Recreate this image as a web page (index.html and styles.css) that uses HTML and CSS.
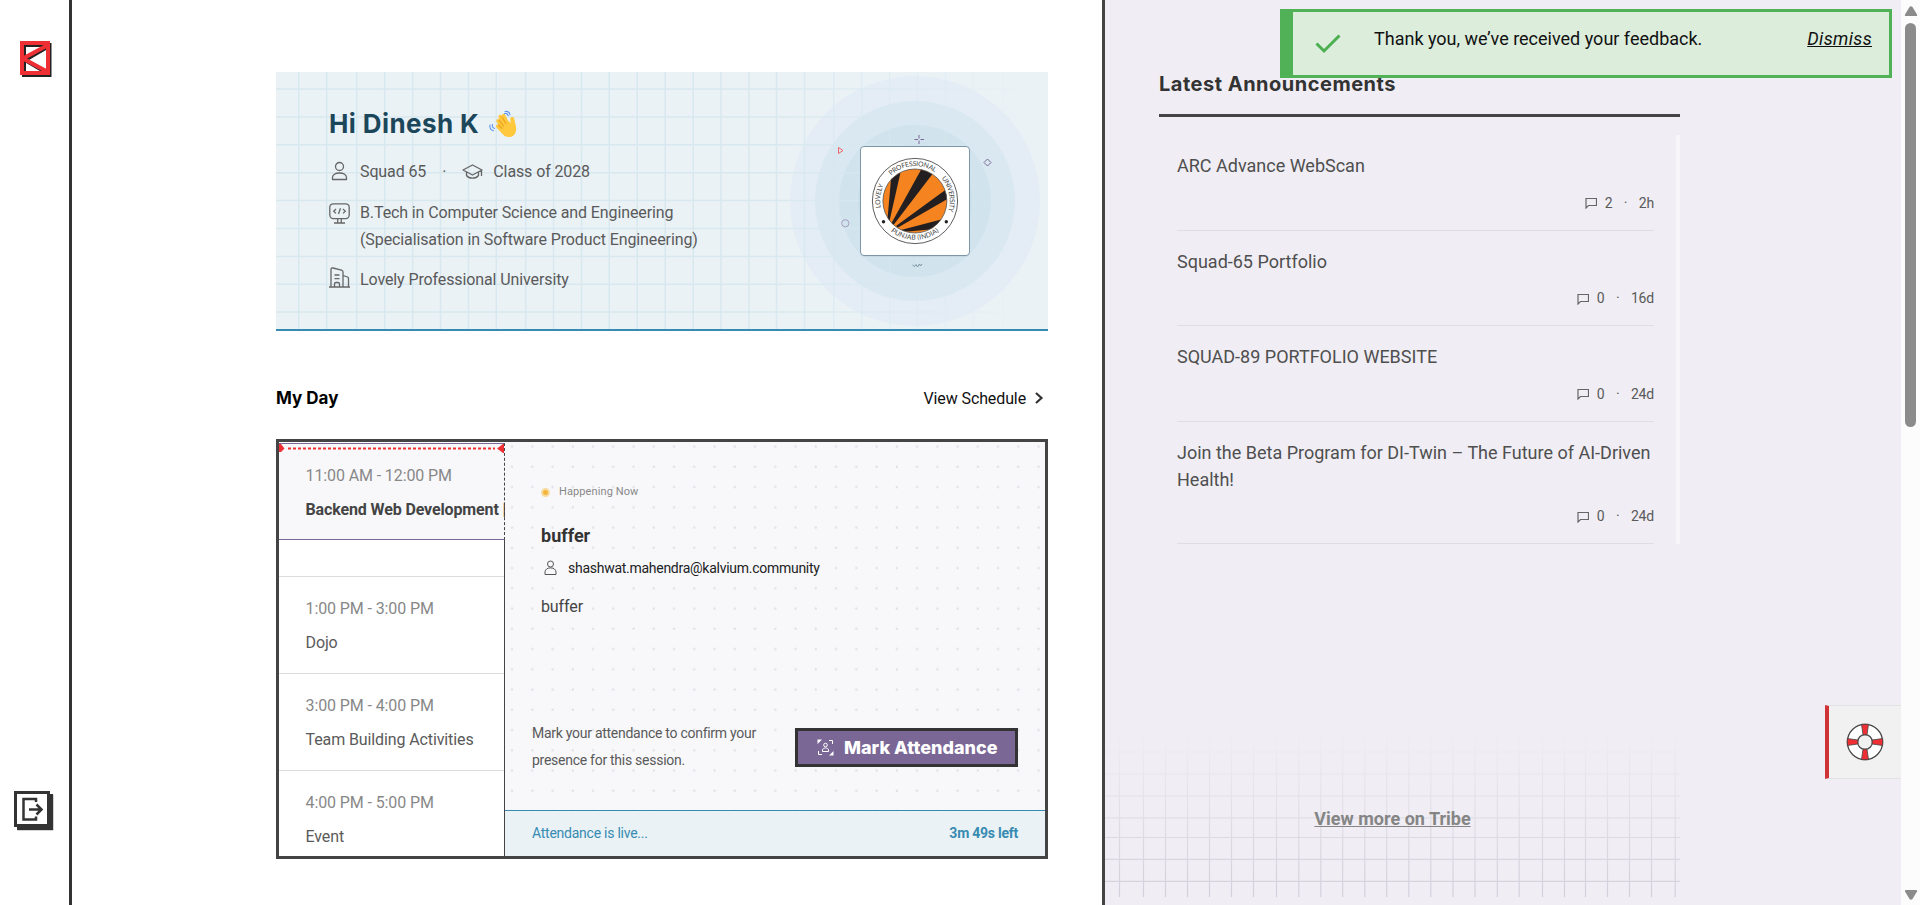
FILE: index.html
```html
<!DOCTYPE html>
<html lang="en">
<head>
<meta charset="utf-8">
<title>Dashboard</title>
<link rel="stylesheet" href="styles.css">
</head>
<body>
<div class="app">
  <nav class="rail">
    <svg class="brand" width="32" height="36" viewBox="0 0 32 36">
      <g fill="none" stroke="#222" stroke-width="4"><path d="M4 4H29.500V34H4ZM29 5L5 19L29 33"/></g>
      <g fill="none" stroke="#ee3034" stroke-width="4"><path d="M2 2H28V32H2ZM28 4L3 17.500L28 31"/></g>
    </svg>
    <svg class="logout" width="40" height="40" viewBox="0 0 40 40">
      <rect x="3.500" y="3.500" width="36" height="36" fill="#aaa"/><rect x="3" y="3" width="36" height="36" fill="#333"/>
      <rect x="1.500" y="1.500" width="33" height="33" fill="#fff" stroke="#333" stroke-width="3"/>
      <path d="M22 11V8H9.500V28.500H22V25.500M15 18.500H27M22.500 13.500L27.500 18.500L22.500 23.500" fill="none" stroke="#333" stroke-width="2.500"/>
    </svg>
  </nav>

  <main class="main">
    <section class="banner">
      <svg class="banner-art" width="772" height="257" viewBox="276 72 772 257">
        <defs>
          <linearGradient id="fade" gradientUnits="userSpaceOnUse" x1="760" y1="0" x2="1048" y2="0"><stop offset="0" stop-color="#d8e8ef"/><stop offset="1" stop-color="#d8e8ef" stop-opacity="0"/></linearGradient>
        </defs>
        <circle cx="915" cy="201" r="125" fill="#e4edf5"/>
        <circle cx="915" cy="201" r="100" fill="#d9e8f1"/>
        <circle cx="915" cy="201" r="76" fill="#d1e3ec"/>
        <circle cx="915" cy="201" r="57" fill="#cadfe9"/>
        <path fill="none" stroke="url(#fade)" stroke-width="1.500" d="M298.700 72V329M326.700 72V329M356.700 72V329M384.700 72V329M412.700 72V329M440.500 72V329M468.500 72V329M496.300 72V329M525.700 72V329M553.500 72V329M581.500 72V329M609.300 72V329M637.200 72V329M665.200 72V329M693.200 72V329M721 72V329M749 72V329M776.500 72V329M804.500 72V329M833.700 72V329M861.700 72V329M889.700 72V329M917.500 72V329M945.500 72V329M973.500 72V329M1003 72V329M1030.700 72V329M276 89H1048.100M276 117H1048.100M276 144.800H1048.100M276 172.700H1048.100M276 200.500H1048.100M276 228.500H1048.100M276 256.400H1048.100M276 284.200H1048.100M276 312.100H1048.100"/>
        <g fill="none" stroke-width="1">
          <path stroke="#7a6796" d="M919 135v3.500M919 140.500v3.500M914.500 139.500h3.500M920.500 139.500h3.500"/>
          <path stroke="#e66" d="M838.500 147.500V153.500L843 150.500Z"/>
          <path stroke="#7a6796" d="M987.500 159L991 162.500L987.500 166L984 162.500Z"/>
          <circle stroke="#a79fc0" cx="845.300" cy="223.300" r="3.600"/>
          <path stroke="#7c95a5" d="M912.500 265l2 1.500l1.500-2l1.500 2.500l2-3l1 2l1.500-2"/>
        </g>
        <rect x="860.500" y="147.500" width="109" height="109" rx="4" fill="#9bb3c0" opacity=".5"/>
        <rect x="860.500" y="146.500" width="109" height="109" rx="3.500" fill="#fff" stroke="#7c98a8"/>
        <defs>
          <clipPath id="disc"><circle cx="914.900" cy="201" r="32"/></clipPath>
          <path id="ringTop" d="M884.100 217a34.800 34.800 0 1 1 61.600 0"/>
          <path id="ringLow" d="M876 206a39.300 39.300 0 0 0 77.800 0"/>
        </defs>
        <circle cx="915" cy="201" r="42.600" fill="#fff" stroke="#333" stroke-width=".8"/>
        <g clip-path="url(#disc)">
          <rect x="880" y="166" width="70" height="70" fill="#f58420"/>
          <g fill="#231f20"><path d="M887.500 219L892 168H901.500L889.500 221Z"/><path d="M891 224L922 168L932.500 174L893.500 225Z"/><path d="M896 226L948 188L949 198L898 227.500Z"/><path d="M901 230L943 219L935 229L903 232Z"/></g>
        </g>
        <circle cx="914.900" cy="201" r="32" fill="none" stroke="#555" stroke-width=".8"/>
        <circle cx="883.500" cy="221.800" r="1.700" fill="#222"/><circle cx="946.300" cy="221.800" r="1.700" fill="#222"/>
        <g class="seal-text">
          <text><textPath href="#ringTop" startOffset="10" textLength="23">LOVELY</textPath></text>
          <text><textPath href="#ringTop" startOffset="45" textLength="47.500">PROFESSIONAL</textPath></text>
          <text><textPath href="#ringTop" startOffset="101.500" textLength="35">UNIVERSITY</textPath></text>
          <text text-anchor="middle"><textPath href="#ringLow" startOffset="50%" textLength="52">PUNJAB (INDIA)</textPath></text>
        </g>
      </svg>
      <div class="profile">
        <div class="greeting"><h1>Hi Dinesh K</h1>
          <svg width="28" height="28" viewBox="0 0 28 28"><path d="M7.500 11.500C6.500 9.500 9 8.500 10 10L9.500 6.500C9.500 4.500 12 4 12.800 6C12.800 3.500 15.500 3 16.500 5.500L19 10.500L21.500 13L21.300 8.500C21.500 6.500 25 6 25.300 9L27 17C28 22 25 27 20 27C17 27 15 26 13 23.500L7.500 17.500C6 15.500 8 14 9.500 15Z" fill="#ffc83d"/><path d="M10 10L14.500 16M12.800 7L17 13.500M9.500 15L12.500 18" fill="none" stroke="#f0a01c" stroke-linecap="round" stroke-width="1.200"/><path d="M16 1.500C18.500 1 20.500 2.500 21 5M15.500 3.500C17.500 3 18.800 4.300 19.200 5.800M1 15C.5 18 2 20 4.500 20.800M3.500 14.500C3 16.500 4 18 5.500 18.500" fill="none" stroke="#5c93ee" stroke-width="1.100" stroke-linecap="round"/></svg>
        </div>
        <div class="fact fact-squad">
          <svg class="ico" viewBox="0 0 21 21"><circle cx="10.500" cy="5.500" r="4"/><path d="M3.500 18.500V16.500C3.500 10.500 17.500 10.500 17.500 16.500V18.500Z" stroke-linejoin="round"/></svg>
          <span>Squad 65</span><span class="dot">·</span>
          <svg class="ico" viewBox="0 0 21 21"><path d="M1 9L10.500 4L20 9L10.500 14ZM4.500 11V14.500C7 18 14 18 16.500 14.500V11M19.500 9.500V15" stroke-linejoin="round"/></svg>
          <span>Class of 2028</span>
        </div>
        <div class="fact fact-degree">
          <svg class="ico" viewBox="0 0 21 21"><rect x=".8" y=".8" width="19.400" height="14.800" rx="3.500"/><path d="M7 6L4.700 8.200L7 10.400M14 6L16.300 8.200L14 10.400M11.500 5.300L9.500 11M8.700 16V19.500M12.300 16V19.500M5 20H16"/></svg>
          <span>B.Tech in Computer Science and Engineering<br>(Specialisation in Software Product Engineering)</span>
        </div>
        <div class="fact fact-campus">
          <svg class="ico" viewBox="0 0 21 21"><path d="M0 20H21M2 20V2.500C2 1 3 .8 4 1L12.500 3.200C13.500 3.500 14 4 14 5V20M14 8.500L18.500 10Q19.500 10.500 19.500 11.500V20M5.500 20V17Q5.500 15.500 7 15.500H9Q10.500 15.500 10.500 17V20M5.500 8H10.500M5.500 11.700H10.500"/></svg>
          <span>Lovely Professional University</span>
        </div>
      </div>
    </section>

    <div class="day-head"><h2>My Day</h2><a class="schedule">View Schedule <svg width="10" height="14" viewBox="0 0 10 14"><path d="M2 2L7.500 7L2 12" fill="none" stroke="#333" stroke-width="2.200"/></svg></a></div>

    <section class="day">
      <div class="slots">
        <div class="slot current">
          <svg class="marker" width="226" height="9" viewBox="0 0 226 9"><path d="M0 0H2L5.500 4.500L2 8H0ZM225 0H224L218 4.500L224 9H225Z" fill="#ee3034"/><path d="M9 4.500H216" stroke="#ee3034" stroke-width="2" stroke-dasharray="3 2"/></svg>
          <time>11:00 AM - 12:00 PM</time><b>Backend Web Development |</b>
        </div>
        <div class="slot break"></div>
        <div class="slot"><time>1:00 PM - 3:00 PM</time><span>Dojo</span></div>
        <div class="slot"><time>3:00 PM - 4:00 PM</time><span>Team Building Activities</span></div>
        <div class="slot"><time>4:00 PM - 5:00 PM</time><span>Event</span></div>
      </div>
      <div class="session">
        <div class="session-body">
          <div class="now"><i></i>Happening Now</div>
          <h3>buffer</h3>
          <div class="mentor"><svg width="13" height="16" viewBox="0 0 13 16"><g fill="none" stroke="#555"><circle cx="6.500" cy="4" r="3"/><path d="M1 14.500V12C1 6.500 12 6.500 12 12V14.500Z" stroke-linejoin="round"/></g></svg>shashwat.mahendra@kalvium.community</div>
          <p class="about">buffer</p>
          <div class="attend">
            <p>Mark your attendance to confirm your presence for this session.</p>
            <button><svg width="17" height="17" viewBox="0 0 17 17"><g fill="none" stroke="#fff" stroke-width="1"><path d="M12 1.500H15.500V5M1.500 12V15.500H5"/><circle cx="8.500" cy="6" r="1.800"/><path d="M5.500 12.500V11C5.500 8.300 11.500 8.300 11.500 11V12.500Z"/></g><path d="M.5.500H5L.5 5ZM16.500 12V16.500H12Z" fill="#fff"/></svg>Mark Attendance</button>
          </div>
        </div>
        <div class="live"><span>Attendance is live...</span><b>3m 49s left</b></div>
      </div>
    </section>
  </main>

  <aside class="side">
    <h2 class="news-title">Latest Announcements</h2>
    <div class="news">
      <article><h4>ARC Advance WebScan</h4><div class="meta"><svg class="chat" viewBox="0 0 12 12"><path d="M1 11V1.500H11.500V8.500H3.500Z"/></svg><span>2</span><span class="sep">·</span><span>2h</span></div></article>
      <article><h4>Squad-65 Portfolio</h4><div class="meta"><svg class="chat" viewBox="0 0 12 12"><path d="M1 11V1.500H11.500V8.500H3.500Z"/></svg><span>0</span><span class="sep">·</span><span>16d</span></div></article>
      <article><h4>SQUAD-89 PORTFOLIO WEBSITE</h4><div class="meta"><svg class="chat" viewBox="0 0 12 12"><path d="M1 11V1.500H11.500V8.500H3.500Z"/></svg><span>0</span><span class="sep">·</span><span>24d</span></div></article>
      <article><h4>Join the Beta Program for DI-Twin – The Future of AI-Driven Health!</h4><div class="meta"><svg class="chat" viewBox="0 0 12 12"><path d="M1 11V1.500H11.500V8.500H3.500Z"/></svg><span>0</span><span class="sep">·</span><span>24d</span></div></article>
    </div>
    <div class="more">
      <svg class="more-grid" width="575" height="162" viewBox="1105 735 575 162"><defs><linearGradient id="rise" gradientUnits="userSpaceOnUse" x1="0" y1="730" x2="0" y2="897"><stop offset="0" stop-color="#d3cfdc" stop-opacity="0"/><stop offset="1" stop-color="#d3cfdc"/></linearGradient></defs>
        <path fill="none" stroke="url(#rise)" stroke-width="1.200" d="M1119.500 735V897M1143.500 735V897M1165.500 735V897M1187.500 735V897M1209.500 735V897M1231.500 735V897M1253.500 735V897M1276.500 735V897M1298.800 735V897M1320.800 735V897M1342.700 735V897M1364.800 735V897M1386.700 735V897M1408.800 735V897M1430.800 735V897M1453 735V897M1475 735V897M1497.300 735V897M1519.200 735V897M1542.500 735V897M1564.500 735V897M1585.500 735V897M1607.500 735V897M1629.500 735V897M1651.500 735V897M1675.200 735V897M1105 752H1680.010M1105 774H1680.010M1105 796H1680.010M1105 817.800H1680.010M1105 837.500H1680.010M1105 859.400H1680.010M1105 881.400H1680.010"/></svg>
      <a>View more on Tribe</a>
    </div>
    <button class="help"><svg width="38" height="38" viewBox="-19 -19 38 38"><circle r="12.500" fill="none" stroke="#444" stroke-width="11.500"/><circle r="12.500" fill="none" stroke="#fff" stroke-width="9"/><g fill="#ee3034" stroke="#444" stroke-width=".8"><path id="w" d="M-3.500 -17.700H3.500L2 -7.200H-2Z"/><use href="#w" transform="rotate(90)"/><use href="#w" transform="rotate(180)"/><use href="#w" transform="rotate(270)"/></g></svg></button>
    <div class="toast"><svg width="26" height="20" viewBox="0 0 26 20"><path d="M1.500 9.500L9 17L24.500 1.500" fill="none" stroke="#4caf50" stroke-width="3"/></svg><span>Thank you, we’ve received your feedback.</span><a>Dismiss</a></div>
  </aside>

  <div class="scroll">
    <svg width="14" height="11" viewBox="0 0 14 11"><path d="M5.500 1Q7-.5 8.500 1L13 8.500Q13.500 10 12 10H2Q.5 10 1 8.500Z" fill="#8b8b8b"/></svg>
    <div class="thumb"></div>
    <svg class="down" width="14" height="11" viewBox="0 0 14 11"><path d="M5.500 10Q7 11.500 8.500 10L13 2.500Q13.500 1 12 1H2Q.5 1 1 2.500Z" fill="#8b8b8b"/></svg>
  </div>
</div>
</body>
</html>
```
FILE: styles.css
```css
* { box-sizing: border-box; }
body { margin: 0; font-family: Roboto, sans-serif; font-size: 16px; color: #5a5a5a; background: #fff; }
h1, h2, h3, h4, p { margin: 0; }
button { font: inherit; }
svg { flex: none; display: block; }
.app { display: flex; width: 1920px; height: 905px; overflow: hidden; }

.rail { width: 72px; border-right: 3px solid #333; display: flex; flex-direction: column; justify-content: space-between; padding: 41px 0 74px; }
.brand { margin-left: 20px; }
.logout { margin-left: 14px; }

.main { width: 1030px; padding: 72px 54px 0 204px; letter-spacing: -.11px; }
.banner { position: relative; height: 259px; background: #eaf2f6; border-bottom: 2px solid #378bb1; }
.banner-art { position: absolute; left: 0; top: 0; letter-spacing: 0; }
.seal-text { font-family: Lato, sans-serif; font-size: 6.8px; fill: #444; }
.profile { position: relative; padding: 35px 0 0 53px; line-height: 27px; }
.greeting { display: flex; align-items: center; gap: 10px; height: 34px; }
h1 { font: 700 26px/34px Inter, sans-serif; color: #1c475b; letter-spacing: .4px; }
.fact { display: flex; gap: 10px; }
.ico { width: 21px; height: 21px; fill: none; stroke: #666; stroke-width: 1.300; margin-top: 3px; }
.fact-squad { margin-top: 17px; }
.dot { margin: 0 6px; }
.fact-degree { margin-top: 14px; }
.fact-degree .ico { margin-top: 4px; }
.fact-campus { margin-top: 13px; }
.fact-campus .ico { margin-top: 1px; }

.day-head { display: flex; justify-content: space-between; align-items: center; height: 24px; margin-top: 55px; color: #111; }
.day-head h2 { font: 700 17px/24px Inter, sans-serif; letter-spacing: 0; color: #000; }
.schedule { display: flex; align-items: center; gap: 8px; padding-right: 4px; }

.day { display: flex; margin-top: 29px; height: 420px; border: 3px solid #444; }
.slots { width: 226px; flex: none; background: linear-gradient(#444, #444) right 98px / 1px 100% no-repeat; overflow: hidden; background-position: right 0 top 98px; }
.slot { height: 97px; margin-right: 1px; padding: 18px 0 0 26.500px; border-bottom: 1px solid #ddd; display: flex; flex-direction: column; gap: 7px; line-height: 27px; white-space: nowrap; }
.slot time { color: #888; }
.slot.current { position: relative; margin: 1px 0 0; background: #f8f8fb; border-top: 1px solid #7a6796; border-bottom-color: #7a6796; border-right: 1px dashed #444; color: #444; }
.slot.current b { letter-spacing: -.13px; }
.slot.break { height: 37px; }
.marker { position: absolute; left: 0; top: 0; }
.session { flex: 1; display: flex; flex-direction: column; }
.session-body { flex: 1; padding: 38px 27px 0 36px; background: #f8f8fb radial-gradient(circle at 6.500px 4.500px, #e2e2e6 0, #e2e2e6 .9px, transparent 1.500px) 0.500px 0 / 20.260px 20.260px; display: flex; flex-direction: column; }
.now { display: flex; align-items: center; gap: 9px; font-size: 11px; line-height: 24px; letter-spacing: .1px; color: #888; }
.now i { width: 9px; height: 9px; border-radius: 50%; background: #f2b63c; border: 2px solid #f8dc9f; }
h3 { font-size: 18px; line-height: 27px; margin-top: 18px; letter-spacing: 0; color: #333; }
.mentor { display: flex; gap: 11px; align-items: center; padding-left: 3px; margin-top: 8px; font-size: 14px; line-height: 22px; letter-spacing: -.27px; color: #222; }
.about { margin-top: 14px; line-height: 27px; color: #444; }
.attend { display: flex; justify-content: space-between; margin: 100px 0 0 -9px; }
.attend p { width: 240px; font-size: 14px; line-height: 27px; letter-spacing: -.27px; }
.attend button { width: 223px; height: 39px; margin-top: 8px; padding: 0 0 1px 19px; display: flex; align-items: center; gap: 10px; background: #7a6796; border: 3px solid #333; color: #fff; font: 800 18px Inter, sans-serif; white-space: nowrap; }
.live { height: 46px; border-top: 1px solid #378bb1; background: #eaf2f6; color: #378bb1; display: flex; justify-content: space-between; align-items: center; padding: 0 27px 2px; font-size: 14px; letter-spacing: -.25px; }

.side { position: relative; flex: 1; background: #f0eef4; border-left: 3px solid #444; padding: 69px 0 0 54px; display: flex; flex-direction: column; }
.news-title { width: 521px; height: 48px; border-bottom: 3px solid #444; font: 700 20px/30px Inter, sans-serif; letter-spacing: .5px; color: #333; }
.news { width: 521px; height: 409px; margin-top: 18px; padding: 0 22px 0 18px; border-right: 4px solid #f8f6f9; }
article { padding: 17px 0 16px; border-bottom: 1px solid #e0dee4; height: 95.500px; }
article:last-child { height: 122.500px; }
h4 { font-size: 18px; font-weight: 400; line-height: 27px; color: #4f4f4f; }
.meta { display: flex; justify-content: flex-end; align-items: center; margin-top: 13.500px; font-size: 14px; line-height: 21px; letter-spacing: -.2px; }
.chat { width: 12px; height: 12px; margin-right: 8px; fill: none; stroke: #666; stroke-width: 1.200; }
.sep { margin: 0 11.500px; }
.more { position: relative; width: 575px; height: 162px; margin: 191px 0 0 -54px; padding-top: 70px; text-align: center; }
.more-grid { position: absolute; inset: 0; }
.more a { position: relative; font-size: 18px; line-height: 27px; font-weight: 700; color: #858585; text-decoration: underline; }
.help { position: absolute; right: 0; top: 705px; width: 76px; height: 74px; padding: 0 0 0 17px; background: #f1f1f1; border: 1px solid #e2e2e2; border-left: 4px solid #cf3237; border-right: 0; display: flex; align-items: center; }
.toast { position: absolute; right: 9px; top: 9px; width: 612px; height: 69px; background: #dceddc; border: 3px solid #50b157; border-left-width: 13px; display: flex; padding: 13px 17px 0 22px; font-size: 18px; line-height: 27px; color: #111; }
.toast svg { margin-top: 9px; }
.toast span { margin-left: 33px; flex: 1; }
.toast a { font-style: italic; text-decoration: underline; letter-spacing: .35px; }

.scroll { width: 19px; background: #fcfcfc; display: flex; flex-direction: column; align-items: center; padding: 6px 0 5px; }
.thumb { width: 11px; height: 404px; margin-top: 6px; border-radius: 6px; background: #8b8b8b; }
.down { margin-top: auto; }
```
